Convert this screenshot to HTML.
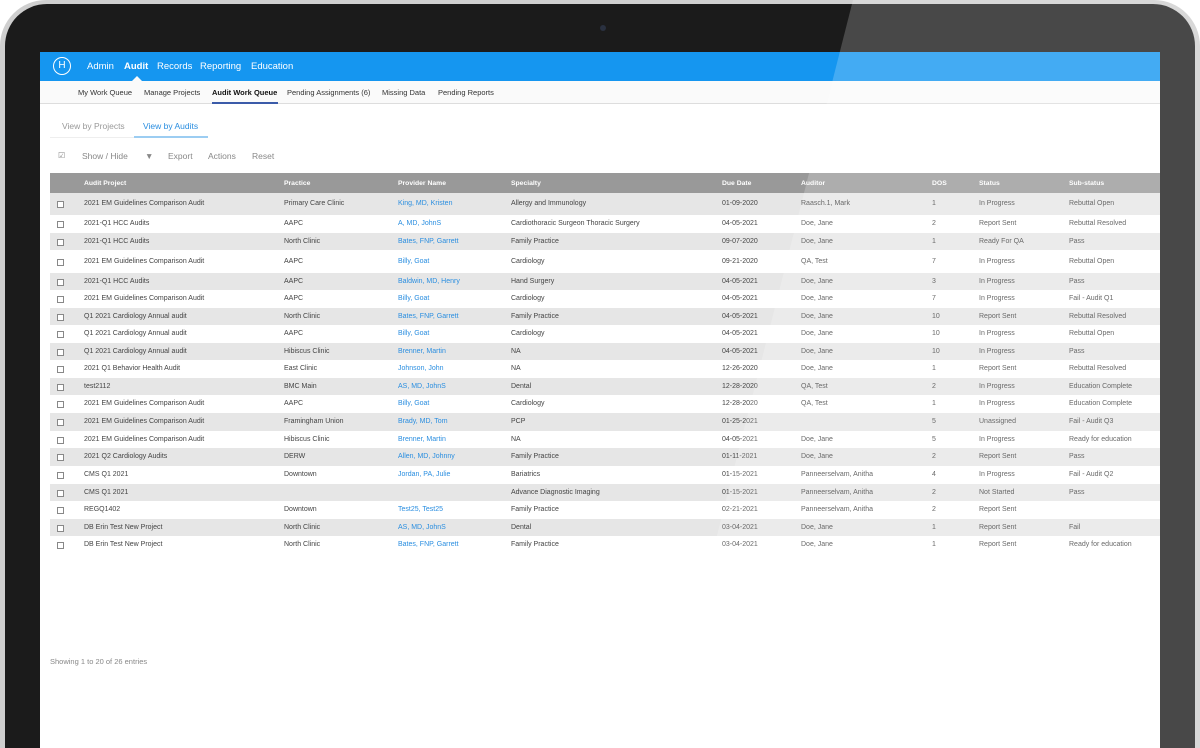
<!DOCTYPE html>
<html><head><meta charset="utf-8"><style>
*{margin:0;padding:0;box-sizing:border-box}
html,body{width:1200px;height:748px;overflow:hidden;background:#fff;font-family:"Liberation Sans",sans-serif}
.wrap{position:relative;width:1200px;height:748px;overflow:hidden}
.outer{position:absolute;left:0;top:0;width:1200px;height:748px;border-radius:46px 46px 0 0;background:#cfcfcf}
.bezel{position:absolute;left:5px;top:4px;width:1190px;height:744px;border-radius:42px 42px 0 0;background:#1b1b1b}
.cam{position:absolute;left:600px;top:25px;width:6px;height:6px;border-radius:50%;background:#2a3140}
.screen{position:absolute;left:40px;top:52px;width:1120px;height:696px;background:#fff;overflow:hidden}
.nav{height:29px;background:#1596f0;position:relative;color:#fff;font-size:9.5px}
.nav span{position:absolute;top:9px}
.logo{position:absolute;left:13px;top:5px;width:18px;height:18px;border:1px solid #fff;border-radius:50%;font-size:10px;text-align:center;line-height:16px}
.sub{height:23px;background:#fafafa;border-bottom:1px solid #ddd;position:relative;font-size:7.5px;color:#333}
.sub span{position:absolute;top:7px}
.t{position:absolute;font-size:8.5px;color:#999}
.tb{position:absolute;font-size:8.5px;color:#888;top:99px}
.th{position:absolute;left:10px;top:121px;width:1110px;height:20px;background:#999;color:#fff;font-size:6.8px;font-weight:bold}
.c{position:absolute;white-space:nowrap}
.row{position:absolute;left:10px;width:1110px;font-size:7px;color:#444}
.row.g{background:#e6e6e6}
.cb{position:absolute;left:7px;width:7px;height:7px;border:1px solid #888;background:#fff}
.a{color:#2a8ee0}
.gloss{position:absolute;left:0;top:0;width:1200px;height:748px;background:rgba(255,255,255,0.2);clip-path:polygon(853px 0,1200px 0,1200px 748px,663px 748px)}
</style></head><body><div class="wrap">
<div class="outer"></div><div class="bezel"></div><div class="cam"></div>
<div class="screen">
<div class="nav"><div class="logo">H</div>
<span style="left:47px">Admin</span><span style="left:84px;font-weight:bold">Audit</span><span style="left:117px">Records</span><span style="left:160px">Reporting</span><span style="left:211px">Education</span>
<div style="position:absolute;left:92px;top:24px;border:5px solid transparent;border-bottom-color:#fafafa;border-top:0"></div></div>
<div class="sub"><span style="left:38px">My Work Queue</span><span style="left:104px">Manage Projects</span><span style="left:172px;font-weight:bold;color:#111">Audit Work Queue</span><span style="left:247px">Pending Assignments (6)</span><span style="left:342px">Missing Data</span><span style="left:398px">Pending Reports</span>
<div style="position:absolute;left:172px;top:21px;width:66px;height:2px;background:#3b5ba9"></div></div>
<div class="t" style="left:22px;top:69px">View by Projects</div>
<div class="t" style="left:103px;top:69px;color:#2a8ee0">View by Audits</div>
<div style="position:absolute;left:10px;top:85px;width:84px;height:1px;background:#eee"></div>
<div style="position:absolute;left:94px;top:84px;width:74px;height:2px;background:#9ccdf2"></div>
<div class="tb" style="left:18px;font-size:8px">☑</div><div class="tb" style="left:42px">Show / Hide</div><div class="tb" style="left:105px;font-weight:bold">▼</div><div class="tb" style="left:128px">Export</div><div class="tb" style="left:168px">Actions</div><div class="tb" style="left:212px">Reset</div>
<div class="th"><span class="c" style="left:34px;top:7px">Audit Project</span><span class="c" style="left:234px;top:7px">Practice</span><span class="c" style="left:348px;top:7px">Provider Name</span><span class="c" style="left:461px;top:7px">Specialty</span><span class="c" style="left:672px;top:7px">Due Date</span><span class="c" style="left:751px;top:7px">Auditor</span><span class="c" style="left:882px;top:7px">DOS</span><span class="c" style="left:929px;top:7px">Status</span><span class="c" style="left:1019px;top:7px">Sub-status</span></div>
<div id="rows"></div>
<div style="position:absolute;left:10px;top:605px;font-size:7.5px;color:#888">Showing 1 to 20 of 26 entries</div>
</div>
<div class="gloss"></div>
</div>
<script>
var d=[
["2021 EM Guidelines Comparison Audit","Primary Care Clinic","King, MD, Kristen","Allergy and Immunology","01-09-2020","Raasch.1, Mark","1","In Progress","Rebuttal Open",141,22],
["2021-Q1 HCC Audits","AAPC","A, MD, JohnS","Cardiothoracic Surgeon Thoracic Surgery","04-05-2021","Doe, Jane","2","Report Sent","Rebuttal Resolved",163,18],
["2021-Q1 HCC Audits","North Clinic","Bates, FNP, Garrett","Family Practice","09-07-2020","Doe, Jane","1","Ready For QA","Pass",181,17],
["2021 EM Guidelines Comparison Audit","AAPC","Billy, Goat","Cardiology","09-21-2020","QA, Test","7","In Progress","Rebuttal Open",198,23],
["2021-Q1 HCC Audits","AAPC","Baldwin, MD, Henry","Hand Surgery","04-05-2021","Doe, Jane","3","In Progress","Pass",221,17],
["2021 EM Guidelines Comparison Audit","AAPC","Billy, Goat","Cardiology","04-05-2021","Doe, Jane","7","In Progress","Fail - Audit Q1",238,18],
["Q1 2021 Cardiology Annual audit","North Clinic","Bates, FNP, Garrett","Family Practice","04-05-2021","Doe, Jane","10","Report Sent","Rebuttal Resolved",256,17],
["Q1 2021 Cardiology Annual audit","AAPC","Billy, Goat","Cardiology","04-05-2021","Doe, Jane","10","In Progress","Rebuttal Open",273,18],
["Q1 2021 Cardiology Annual audit","Hibiscus Clinic","Brenner, Martin","NA","04-05-2021","Doe, Jane","10","In Progress","Pass",291,17],
["2021 Q1 Behavior Health Audit","East Clinic","Johnson, John","NA","12-26-2020","Doe, Jane","1","Report Sent","Rebuttal Resolved",308,18],
["test2112","BMC Main","AS, MD, JohnS","Dental","12-28-2020","QA, Test","2","In Progress","Education Complete",326,17],
["2021 EM Guidelines Comparison Audit","AAPC","Billy, Goat","Cardiology","12-28-2020","QA, Test","1","In Progress","Education Complete",343,18],
["2021 EM Guidelines Comparison Audit","Framingham Union","Brady, MD, Tom","PCP","01-25-2021","","5","Unassigned","Fail - Audit Q3",361,18],
["2021 EM Guidelines Comparison Audit","Hibiscus Clinic","Brenner, Martin","NA","04-05-2021","Doe, Jane","5","In Progress","Ready for education",379,17],
["2021 Q2 Cardiology Audits","DERW","Allen, MD, Johnny","Family Practice","01-11-2021","Doe, Jane","2","Report Sent","Pass",396,18],
["CMS Q1 2021","Downtown","Jordan, PA, Julie","Bariatrics","01-15-2021","Panneerselvam, Anitha","4","In Progress","Fail - Audit Q2",414,18],
["CMS Q1 2021","","","Advance Diagnostic Imaging","01-15-2021","Panneerselvam, Anitha","2","Not Started","Pass",432,17],
["REGQ1402","Downtown","Test25, Test25","Family Practice","02-21-2021","Panneerselvam, Anitha","2","Report Sent","",449,18],
["DB Erin Test New Project","North Clinic","AS, MD, JohnS","Dental","03-04-2021","Doe, Jane","1","Report Sent","Fail",467,17],
["DB Erin Test New Project","North Clinic","Bates, FNP, Garrett","Family Practice","03-04-2021","Doe, Jane","1","Report Sent","Ready for education",484,18]];
var x=[34,234,348,461,672,751,882,929,1019],h="";
d.forEach(function(r,i){var ty=Math.round(r[10]/2-4);h+='<div class="row'+(i%2?'':' g')+'" style="top:'+r[9]+'px;height:'+r[10]+'px"><div class="cb" style="top:'+(ty+1)+'px"></div>';
for(var k=0;k<9;k++)h+='<span class="c'+(k==2?' a':'')+'" style="left:'+x[k]+'px;top:'+ty+'px">'+r[k]+'</span>';h+='</div>';});
document.getElementById('rows').innerHTML=h;
</script>
</body></html>
